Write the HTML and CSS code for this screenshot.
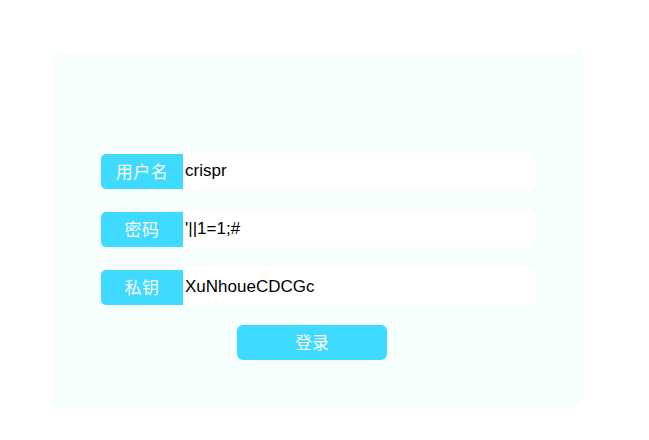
FILE: index.html
```html
<!DOCTYPE html>
<html lang="zh">
<head>
<meta charset="utf-8">
<title>登录</title>
<link rel="stylesheet" href="styles.css">
</head>
<body>
<div class="card">
  <form class="form">
    <div class="row">
      <span class="label">用户名</span>
      <input class="field" type="text" value="crispr">
    </div>
    <div class="row">
      <span class="label">密码</span>
      <input class="field" type="text" value="'||1=1;#">
    </div>
    <div class="row">
      <span class="label">私钥</span>
      <input class="field" type="text" value="XuNhoueCDCGc">
    </div>
    <div class="actions">
      <button class="submit" type="button">登录</button>
    </div>
  </form>
</div>
</body>
</html>
```
FILE: styles.css
```css
html, body {
  margin: 0;
  padding: 0;
  background: #ffffff;
}
body {
  padding: 52px 0 0 52px;
  font-family: "Liberation Sans", "Noto Sans CJK SC", sans-serif;
}
.card {
  box-sizing: border-box;
  width: 532px;
  height: 356px;
  background: #f6fffe;
  border-radius: 10px;
  padding: 100px 0 0 49px;
}
.form {
  display: flex;
  flex-direction: column;
  gap: 20px;
}
.row {
  display: flex;
  align-items: center;
  height: 38px;
}
.label {
  box-sizing: border-box;
  width: 82px;
  height: 35px;
  background: #3edaff;
  color: #ffffff;
  border-radius: 5px 0 0 5px;
  display: flex;
  align-items: center;
  justify-content: center;
  padding-bottom: 2px;
  font-family: "Noto Sans CJK SC", sans-serif;
  font-size: 17px;
  letter-spacing: 0.5px;
}
.field {
  box-sizing: border-box;
  width: 352px;
  height: 38px;
  border: none;
  outline: none;
  background: #ffffff;
  border-radius: 0 6px 6px 0;
  padding: 0 0 0 2px;
  margin: 0;
  font-family: "Liberation Sans", "Noto Sans CJK SC", sans-serif;
  font-size: 17px;
  color: #000000;
}
.actions {
  display: flex;
  padding-left: 136px;
  margin-top: -1px;
}
.submit {
  width: 150px;
  height: 35px;
  border: none;
  background: #3edaff;
  color: #ffffff;
  border-radius: 6px;
  font-family: "Noto Sans CJK SC", sans-serif;
  font-size: 17px;
  padding: 0 0 2px 0;
}
```
